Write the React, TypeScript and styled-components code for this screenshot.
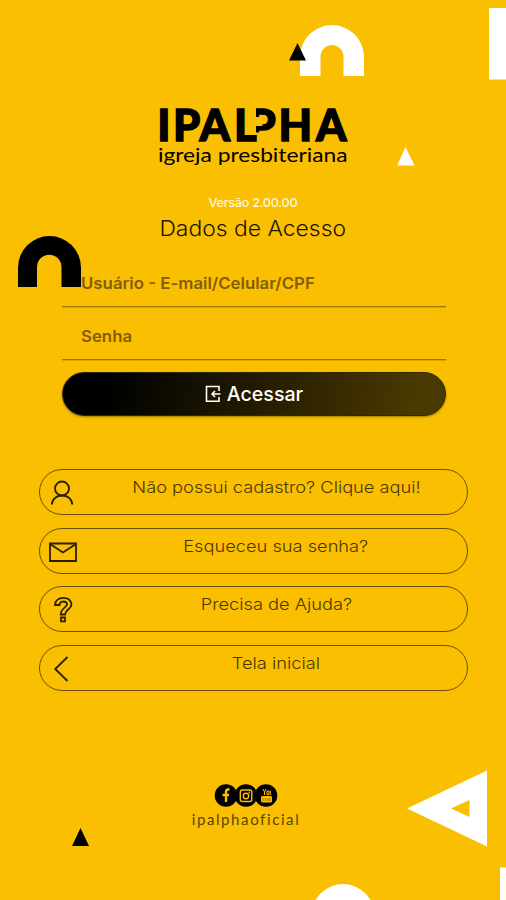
import React from "react";
import styled, { createGlobalStyle } from "styled-components";

const yellow = "#fabf00";

const GlobalStyle = createGlobalStyle`
  html, body { margin: 0; padding: 0; background: ${yellow}; }
  * { box-sizing: border-box; }
`;

const Screen = styled.main`
  position: relative;
  width: 506px;
  height: 900px;
  overflow: hidden;
  background: ${yellow};
  font-family: Inter, "Open Sans", sans-serif;
  color: #000;
  display: flex;
  flex-direction: column;
`;

const Backdrop = styled.svg`
  position: absolute;
  inset: 0;
  pointer-events: none;
`;

const Header = styled.header`
  position: relative;
  display: flex;
  flex-direction: column;
  align-items: center;
  padding-top: 90px;
  height: 254px;
`;

const Logo = styled.svg`
  display: block;
  width: 200px;
  height: 80px;
  flex: none;
  overflow: visible;
`;

const Fit = styled.span<{ $x?: number }>`
  display: inline-block;
  white-space: nowrap;
  transform: scaleX(${(p) => p.$x ?? 1});
`;

const Version = styled.p`
  margin: 25px 0 0;
  font-size: 12px;
  line-height: 16px;
  font-weight: 500;
  color: #fff6da;
  letter-spacing: -0.3px;
`;

const Title = styled.h1`
  margin: 5px 0 0;
  font-size: 22px;
  line-height: 24px;
  font-weight: 350;
  color: #1c1500;
`;

const Form = styled.form`
  position: relative;
  width: 384px;
  margin-left: 62px;
`;

const Field = styled.label`
  display: flex;
  align-items: center;
  height: 53px;
  padding: 5px 0 0 19px;
  border-bottom: 1px solid #9c7600;
  box-shadow: 0 1px 0 rgba(120, 90, 0, 0.25);
  font-size: 16px;
  font-weight: 600;
  color: #835c0a;

  ${Fit} { transform-origin: left; }
`;

const Submit = styled.button`
  display: flex;
  align-items: center;
  justify-content: center;
  gap: 5px;
  width: 384px;
  height: 44px;
  margin-top: 12px;
  padding: 0 0 1px;
  border: 1px solid #332700;
  border-radius: 22px;
  background: linear-gradient(100deg, #000 12%, #4a3900 92%);
  box-shadow: 0 1px 2px rgba(80, 60, 0, 0.5);
  color: #fff;
  font: 450 20px Inter, sans-serif;
`;

const Actions = styled.nav`
  position: relative;
  display: flex;
  flex-direction: column;
  gap: 12.6px;
  width: 429px;
  margin: 53px 0 0 39px;
`;

const Action = styled.a`
  display: grid;
  grid-template-columns: 45px 1fr;
  height: 46px;
  border: 1px solid #6a5000;
  border-radius: 23px;
  color: #4a3800;
`;

const ActionIcon = styled.svg`
  width: 32px;
  height: 32px;
  margin: 7px 0 0 7px;
  fill: none;
  stroke: #2a1f00;
  stroke-width: 1.8;
`;

const ActionText = styled.span`
  padding-top: 5px;
  text-align: center;
  font-size: 16.5px;
  font-weight: 350;
  line-height: 24px;
`;

const Footer = styled.footer`
  position: relative;
  display: flex;
  flex-direction: column;
  align-items: center;
  width: 492px;
  margin-top: 92px;
`;

const Social = styled.svg`
  display: block;
  width: 64px;
  height: 25px;
`;

const Handle = styled.p`
  margin: 1px 0 0;
  font: 400 15px/20px Lato, sans-serif;
  letter-spacing: 1.6px;
  color: #5b4500;
`;

const actions = [
  {
    label: "Não possui cadastro? Clique aqui!",
    icon: (
      <>
        <circle cx="15" cy="11.5" r="7" />
        <path d="M4.8 27.5C5.7 15.5 24.5 15.5 25.3 27.5" />
      </>
    ),
  },
  {
    label: "Esqueceu sua senha?",
    icon: (
      <>
        <path d="M3 7.5H29V25H3Z" />
        <path d="M3 8L16 16.5L29 8" />
      </>
    ),
  },
  {
    label: "Precisa de Ajuda?",
    icon: (
      <>
        <path d="M8 11C8 1.5 24.5 1.5 24.5 10.5C24.5 15 18 15.5 18 20.5H13.8C13.8 13.5 20 14 20 10.2C20 6.5 12.5 6.5 12.5 11Z" />
        <path d="M14 23.5H18V27.3H14Z" />
      </>
    ),
  },
  {
    label: "Tela inicial",
    icon: <path d="M20.5 4L8.2 16L20.5 28" />,
  },
];

function Shapes() {
  return (
    <Backdrop width="506" height="900" viewBox="0 0 506 900" fill="#fff">
      <path d="M300 76V57A32 32 0 0 1 364 57V76H343.5V57A11.5 12 0 0 0 320.5 57V76Z" />
      <path d="M297.5 43L306 60.5H289Z" fill="#000" />
      <path d="M489 8H506V79.5H489Z" />
      <path d="M405.5 147L414.5 165.5H397Z" />
      <path d="M18 287V267.5A31.5 31.5 0 0 1 81 267.5V287H61.5V267A12 12 0 0 0 37 267V287Z" fill="#000" />
      <path d="M487 770.5V846.5L407 808.5ZM469.5 800L451 808.5L469.5 817Z" fillRule="evenodd" />
      <path d="M80.5 828L89 846H72Z" fill="#000" />
      <circle cx="343" cy="915.5" r="31.5" />
      <path d="M500 867.5H506V900H500Z" />
    </Backdrop>
  );
}

function BrandLogo() {
  return (
    <Logo viewBox="154 90 200 80">
      <g fontFamily="Lato" fontWeight="900" fontSize="43.5" stroke="#000" strokeWidth="1.3">
        <text y="141.3" x="249.5">P</text>
        <path d="M250 117H263.5V126H250ZM250 132.5H264V145H250Z" fill={yellow} stroke="none" />
        <path d="M250 105H257V134H250Z" fill={yellow} stroke="none" />
        <text y="141.3" x="158.2 174 200.5 235">IPAL</text>
        <text y="141.3" x="279.5 317">HA</text>
      </g>
      <text
        x="159"
        y="161.5"
        fontFamily="Lato"
        fontSize="19.5"
        textLength="189.5"
        lengthAdjust="spacingAndGlyphs"
      >
        igreja presbiteriana
      </text>
    </Logo>
  );
}

function SocialIcons() {
  return (
    <Social viewBox="214 783 64 25">
      <circle cx="226" cy="795.5" r="11.3" />
      <circle cx="246" cy="795.5" r="11.3" />
      <circle cx="266" cy="795.5" r="11.3" />
      <path d="M229.5 789.5H228Q226 789.5 226 792V802M222.5 795H229" fill="none" stroke={yellow} strokeWidth="2.4" />
      <rect x="240.3" y="790" width="11.5" height="11.5" rx="2" fill="none" stroke={yellow} strokeWidth="1.4" />
      <circle cx="246" cy="796" r="2.7" fill="none" stroke={yellow} strokeWidth="1.4" />
      <circle cx="249.3" cy="792.4" r=".8" fill={yellow} />
      <rect x="261" y="796" width="11" height="6.5" rx="1.5" fill={yellow} />
      <path d="M263 789L264.5 792V795M266 789L264.5 792M267 791H269V794.5H267ZM270.3 790.5V795" fill="none" stroke={yellow} strokeWidth="1" />
      <path d="M263 798V801M265.5 798V801M268 798V801M270 798V801" stroke="#6f5500" strokeWidth=".7" />
    </Social>
  );
}

export default function App() {
  return (
    <>
      <GlobalStyle />
      <Screen>
        <Shapes />
        <Header>
          <BrandLogo />
          <Version><Fit $x={1.06}>Versão 2.00.00</Fit></Version>
          <Title><Fit $x={1.04}>Dados de Acesso</Fit></Title>
        </Header>
        <Form>
          <Field><Fit $x={1.05}>Usuário - E-mail/Celular/CPF</Fit></Field>
          <Field><Fit $x={1.05}>Senha</Fit></Field>
          <Submit type="button">
            <svg width="16" height="18" viewBox="0 0 16 18" fill="none" stroke="#fff" strokeWidth="1.6">
              <path d="M14 6V1.5H1.5V16.2H14V12M15.5 9H7M10 6L7 9L10 12" />
            </svg>
            <Fit $x={0.98}>Acessar</Fit>
          </Submit>
        </Form>
        <Actions>
          {actions.map((a) => (
            <Action key={a.label}>
              <ActionIcon viewBox="0 0 32 32">{a.icon}</ActionIcon>
              <ActionText><Fit $x={1.105}>{a.label}</Fit></ActionText>
            </Action>
          ))}
        </Actions>
        <Footer>
          <SocialIcons />
          <Handle>ipalphaoficial</Handle>
        </Footer>
      </Screen>
    </>
  );
}
